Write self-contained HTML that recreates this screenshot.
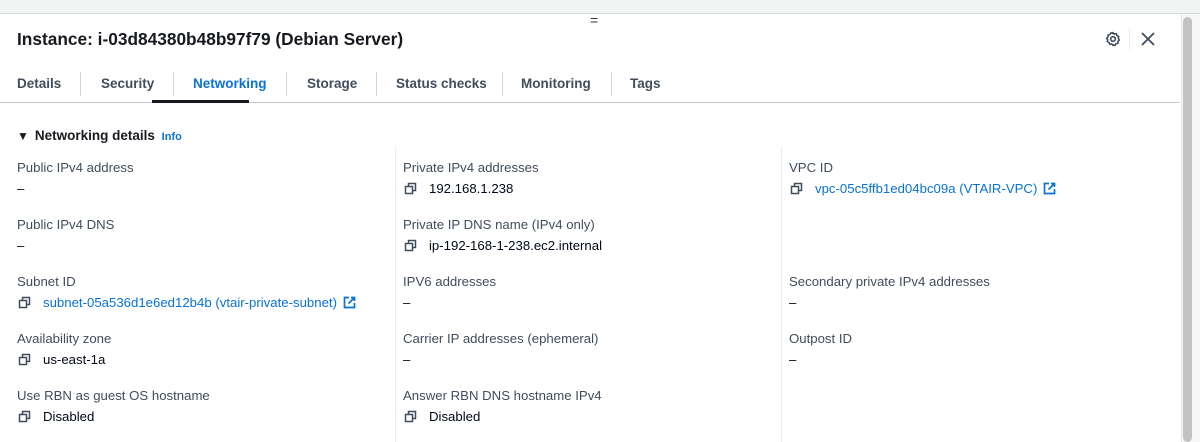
<!DOCTYPE html>
<html><head><meta charset="utf-8"><style>
body{margin:0;width:1200px;height:442px;overflow:hidden;background:#fff;font-family:"Liberation Sans",sans-serif;color:#000716;position:relative}
.a{position:absolute;white-space:nowrap}
.lbl{font-size:13.2px;color:#414d5c}
.val{font-size:13.2px;color:#000716}
.lnk{color:#0972d3}
.tab{position:absolute;top:76px;font-size:13.5px;font-weight:bold;color:#414d5c}
.sep{position:absolute;top:72px;width:1px;height:24px;background:#d1d5db}
.cp{display:inline-block;vertical-align:-2px;margin-right:12px}
</style></head><body>
<div class="a" style="left:0;top:0;width:1200px;height:13px;background:#f2f3f3;border-bottom:1px solid #d5dbdb"></div>
<div class="a" style="left:590px;top:12px;font-size:14px;color:#333">=</div>
<div class="a" style="left:1181px;top:14px;width:19px;height:428px;background:#f7f7f7;border-left:1px solid #e5e5e5"></div>
<div class="a" style="left:1183px;top:17px;width:9px;height:425px;background:#c2c2c2;border-radius:5px"></div>
<div class="a" style="left:17px;top:29px;font-size:17.3px;font-weight:bold;color:#16191f">Instance: i-03d84380b48b97f79 (Debian Server)</div>
<svg class="a" style="left:1105px;top:31px" width="16" height="16" viewBox="0 0 16 16"><circle cx="8" cy="8" r="2.3" fill="none" stroke="#414d5c" stroke-width="1.6"/><path d="M8 1.5l1.3 1.6 2-.5.6 2 1.9.8-.6 2 1.3 1.6-1.6 1.3.2 2-2 .3-.9 1.9-1.9-.8L8 14.5l-1.3-1.6-2 .5-.6-2-1.9-.8.6-2L1.5 7.3l1.6-1.3-.2-2 2-.3.9-1.9 1.9.8z" fill="none" stroke="#414d5c" stroke-width="1.5" stroke-linejoin="round"/></svg>
<div class="a" style="left:1129px;top:28px;width:1px;height:22px;background:#eee"></div>
<svg class="a" style="left:1141px;top:32px" width="14" height="14" viewBox="0 0 14 14"><path d="M1 1L13 13M13 1L1 13" stroke="#414d5c" stroke-width="1.8"/></svg>
<div class="tab" style="left:17px">Details</div><div class="sep" style="left:80px"></div>
<div class="tab" style="left:101px">Security</div><div class="sep" style="left:173px"></div>
<div class="tab" style="left:193px;color:#0972d3">Networking</div><div class="sep" style="left:286px"></div>
<div class="tab" style="left:307px">Storage</div><div class="sep" style="left:376px"></div>
<div class="tab" style="left:396px">Status checks</div><div class="sep" style="left:502px"></div>
<div class="tab" style="left:521px">Monitoring</div><div class="sep" style="left:611px"></div>
<div class="tab" style="left:630px">Tags</div>
<div class="a" style="left:0;top:102px;width:1180px;height:1px;background:#c6c6cd"></div>
<div class="a" style="left:152px;top:100px;width:97px;height:3px;background:#16191f"></div>
<div class="a" style="left:17px;top:128px;font-size:13.5px;font-weight:bold;color:#16191f"><span style="font-size:12px;margin-right:6px">▼</span>Networking details <span style="font-size:11px;color:#0972d3;margin-left:3px">Info</span></div>
<div class="a" style="left:395px;top:148px;width:1px;height:294px;background:#eaeded"></div>
<div class="a" style="left:781px;top:148px;width:1px;height:294px;background:#eaeded"></div>
<svg width="0" height="0" style="position:absolute"><defs><symbol id="c" viewBox="0 0 13 13"><path d="M1.5 4.5h7v7h-7z M4.5 4.5V1.5h7v7h-3" fill="none" stroke="#414d5c" stroke-width="1.5"/></symbol><symbol id="e" viewBox="0 0 13 13"><path d="M6 1.5H1.5v10h10V7 M8 1.5h3.5V5 M11.5 1.5L5.5 7.5" fill="none" stroke="#0972d3" stroke-width="1.7"/></symbol></defs></svg>

<div class="a lbl" style="left:17px;top:160px">Public IPv4 address</div>
<div class="a val" style="left:17px;top:181px">–</div>
<div class="a lbl" style="left:17px;top:217px">Public IPv4 DNS</div>
<div class="a val" style="left:17px;top:238px">–</div>
<div class="a lbl" style="left:17px;top:274px">Subnet ID</div>
<div class="a val lnk" style="left:18px;top:295px"><svg class="cp" width="13" height="13"><use href="#c"/></svg>subnet-05a536d1e6ed12b4b (vtair-private-subnet) <svg width="13" height="13" style="vertical-align:-2px;margin-left:2px"><use href="#e"/></svg></div>
<div class="a lbl" style="left:17px;top:331px">Availability zone</div>
<div class="a val" style="left:18px;top:352px"><svg class="cp" width="13" height="13"><use href="#c"/></svg>us-east-1a</div>
<div class="a lbl" style="left:17px;top:388px">Use RBN as guest OS hostname</div>
<div class="a val" style="left:18px;top:409px"><svg class="cp" width="13" height="13"><use href="#c"/></svg>Disabled</div>

<div class="a lbl" style="left:403px;top:160px">Private IPv4 addresses</div>
<div class="a val" style="left:404px;top:181px"><svg class="cp" width="13" height="13"><use href="#c"/></svg>192.168.1.238</div>
<div class="a lbl" style="left:403px;top:217px">Private IP DNS name (IPv4 only)</div>
<div class="a val" style="left:404px;top:238px"><svg class="cp" width="13" height="13"><use href="#c"/></svg>ip-192-168-1-238.ec2.internal</div>
<div class="a lbl" style="left:403px;top:274px">IPV6 addresses</div>
<div class="a val" style="left:403px;top:295px">–</div>
<div class="a lbl" style="left:403px;top:331px">Carrier IP addresses (ephemeral)</div>
<div class="a val" style="left:403px;top:352px">–</div>
<div class="a lbl" style="left:403px;top:388px">Answer RBN DNS hostname IPv4</div>
<div class="a val" style="left:404px;top:409px"><svg class="cp" width="13" height="13"><use href="#c"/></svg>Disabled</div>

<div class="a lbl" style="left:789px;top:160px">VPC ID</div>
<div class="a val lnk" style="left:790px;top:181px"><svg class="cp" width="13" height="13"><use href="#c"/></svg>vpc-05c5ffb1ed04bc09a (VTAIR-VPC) <svg width="13" height="13" style="vertical-align:-2px;margin-left:2px"><use href="#e"/></svg></div>
<div class="a lbl" style="left:789px;top:274px">Secondary private IPv4 addresses</div>
<div class="a val" style="left:789px;top:295px">–</div>
<div class="a lbl" style="left:789px;top:331px">Outpost ID</div>
<div class="a val" style="left:789px;top:352px">–</div>
</body></html>
